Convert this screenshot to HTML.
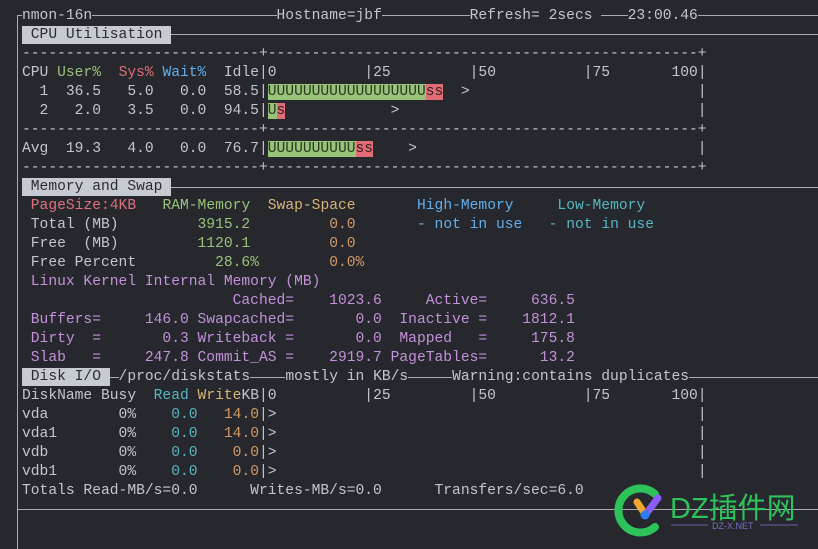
<!DOCTYPE html>
<html><head><meta charset="utf-8"><style>
html,body{margin:0;padding:0;background:#26282e;width:818px;height:549px;overflow:hidden;position:relative}
.r{position:absolute;left:22px;height:19px;line-height:19px;font-family:"Liberation Mono",monospace;font-size:14.63px;color:#c3c6cc;white-space:pre;margin:0}
.h{position:absolute;height:1px;background:#a9adb3}
.v{position:absolute;width:1px;background:#a9adb3}
.box{background:#c6cad1;color:#2a2c32;display:inline-block;height:18px;line-height:19px;vertical-align:top}
.g{color:#98c379}.rd{color:#e06c75}.b{color:#61afef}.o{color:#d19a66}.y{color:#d8b474}.p{color:#c391d9}.c{color:#56b6c2}.pk{color:#e0707a}
.gb{background:#98c379;color:#2a3a22}.rb{background:#e06c75;color:#3a2024}
.bg{background:#26282e}
</style></head><body>
<div class="v" style="left:17px;top:15px;height:534px"></div>
<div class="h" style="left:17px;top:15px;width:801px"></div>
<div class="h" style="left:171px;top:34px;width:647px"></div>
<div class="h" style="left:171px;top:187px;width:647px"></div>
<div class="h" style="left:110px;top:377px;width:708px"></div>
<div class="h" style="left:17px;top:509px;width:801px"></div>

<div class="r" style="top:6.5px"><span class="bg">nmon-16n</span>                     <span class="bg">Hostname=jbf</span>          <span class="bg">Refresh= 2secs </span>   <span class="bg">23:00.46</span></div>
<div class="r" style="top:25.5px"><span class="box"> CPU Utilisation </span></div>
<div class="r" style="top:44.5px">---------------------------+-------------------------------------------------+</div>
<div class="r" style="top:63.5px">CPU <span class="g">User%</span>  <span class="rd">Sys%</span> <span class="b">Wait%</span>  Idle|0          |25         |50          |75       100|</div>
<div class="r" style="top:82.5px">  1  36.5   5.0   0.0  58.5|<span class="gb">UUUUUUUUUUUUUUUUUU</span><span class="rb">ss</span>  &gt;                          |</div>
<div class="r" style="top:101.5px">  2   2.0   3.5   0.0  94.5|<span class="gb">U</span><span class="rb">s</span>            &gt;                                  |</div>
<div class="r" style="top:120.5px">---------------------------+-------------------------------------------------+</div>
<div class="r" style="top:139.5px">Avg  19.3   4.0   0.0  76.7|<span class="gb">UUUUUUUUUU</span><span class="rb">ss</span>    &gt;                                |</div>
<div class="r" style="top:158.5px">---------------------------+-------------------------------------------------+</div>
<div class="r" style="top:177.5px"><span class="box"> Memory and Swap </span></div>
<div class="r" style="top:196.5px"> <span class="pk">PageSize:4KB</span>   <span class="g">RAM-Memory</span>  <span class="y">Swap-Space</span>       <span class="b">High-Memory</span>     <span class="c">Low-Memory</span></div>
<div class="r" style="top:215.5px"> Total (MB)         <span class="g">3915.2</span>         <span class="o">0.0</span>       <span class="b">- not in use</span>   <span class="c">- not in use</span></div>
<div class="r" style="top:234.5px"> Free  (MB)         <span class="g">1120.1</span>         <span class="o">0.0</span></div>
<div class="r" style="top:253.5px"> Free Percent         <span class="g">28.6%</span>        <span class="o">0.0%</span></div>
<div class="r p" style="top:272.5px"> Linux Kernel Internal Memory (MB)</div>
<div class="r p" style="top:291.5px">                        Cached=    1023.6     Active=     636.5</div>
<div class="r p" style="top:310.5px"> Buffers=     146.0 Swapcached=       0.0  Inactive =    1812.1</div>
<div class="r p" style="top:329.5px"> Dirty  =       0.3 Writeback =       0.0  Mapped   =     175.8</div>
<div class="r p" style="top:348.5px"> Slab   =     247.8 Commit_AS =    2919.7 PageTables=      13.2</div>
<div class="r" style="top:367.5px"><span class="box"> Disk I/O </span> <span class="bg">/proc/diskstats</span>    <span class="bg">mostly in KB/s</span>     <span class="bg">Warning:contains duplicates</span></div>
<div class="r" style="top:386.5px">DiskName Busy  <span class="c">Read</span> <span class="y">Write</span>KB|0          |25         |50          |75       100|</div>
<div class="r" style="top:405.5px">vda        0%    <span class="c">0.0</span>   <span class="o">14.0</span>|&gt;                                                |</div>
<div class="r" style="top:424.5px">vda1       0%    <span class="c">0.0</span>   <span class="o">14.0</span>|&gt;                                                |</div>
<div class="r" style="top:443.5px">vdb        0%    <span class="c">0.0</span>    <span class="o">0.0</span>|&gt;                                                |</div>
<div class="r" style="top:462.5px">vdb1       0%    <span class="c">0.0</span>    <span class="o">0.0</span>|&gt;                                                |</div>
<div class="r" style="top:481.5px">Totals Read-MB/s=0.0      Writes-MB/s=0.0      Transfers/sec=6.0</div>

<svg style="position:absolute;left:610px;top:480px" width="208" height="69">
<path d="M45 14 A22 22 0 1 0 45 47" fill="none" stroke="#2ec25a" stroke-width="8" stroke-linecap="round"/>
<line x1="27" y1="22" x2="35" y2="34" stroke="#f0a830" stroke-width="7" stroke-linecap="round"/>
<line x1="36" y1="34" x2="48" y2="18" stroke="#8b5cf6" stroke-width="7" stroke-linecap="round"/>
<circle cx="35" cy="35" r="4.5" fill="#2f7df6"/>
<text x="60" y="38" font-family="Liberation Sans,'Noto Sans CJK SC',sans-serif" font-size="29" fill="#2ec25a">DZ插件网</text>
<line x1="61" y1="45" x2="98" y2="45" stroke="#6a5fb0"/>
<line x1="150" y1="45" x2="188" y2="45" stroke="#6a5fb0"/>
<text x="102" y="49" font-family="Liberation Sans,sans-serif" font-size="9" fill="#7a70c0">DZ-X.NET</text>
</svg>
</body></html>
